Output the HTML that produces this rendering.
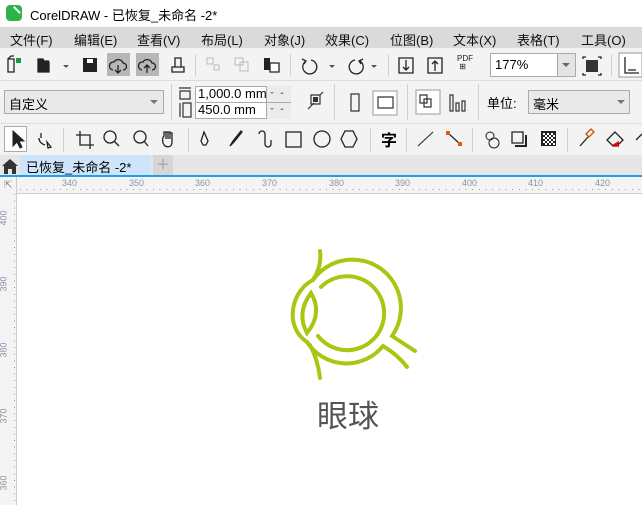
<!DOCTYPE html>
<html><head><meta charset="utf-8"><style>
*{margin:0;padding:0;box-sizing:border-box}
body{width:642px;height:505px;overflow:hidden;background:#fff;font-family:"Liberation Sans","Noto Sans CJK SC",sans-serif;position:relative;color:#000}
.a{position:absolute}
.menu span{position:absolute;top:3px;font-size:13px;color:#111}
.tb{background:#f3f3f3}
.sep{position:absolute;width:1px;background:#d0d0d0}
.rl{position:absolute;font-size:9px;color:#8a93a6}
svg{position:absolute;overflow:visible}
</style></head><body>
<div class="a" style="left:6px;top:5px;width:16px;height:16px;background:#2db34a;border-radius:4px"></div>
<div class="a" style="left:10px;top:8px;width:9px;height:9px;border-top:2px solid #fff;transform:rotate(45deg)"></div>
<div class="a" style="left:30px;top:5px;font-size:13px">CorelDRAW - 已恢复_未命名 -2*</div>
<div class="a menu" style="left:0;top:27px;width:642px;height:21px;background:#dadada">
<span style="left:10px">文件(F)</span><span style="left:74px">编辑(E)</span><span style="left:137px">查看(V)</span><span style="left:201px">布局(L)</span><span style="left:264px">对象(J)</span><span style="left:325px">效果(C)</span><span style="left:390px">位图(B)</span><span style="left:453px">文本(X)</span><span style="left:517px">表格(T)</span><span style="left:581px">工具(O)</span>
</div>
<div class="a tb" style="left:0;top:48px;width:642px;height:32px"></div>
<div class="a" style="left:0;top:80px;width:642px;height:1px;background:#dcdcdc"></div>
<div class="a" style="left:107px;top:53px;width:23px;height:23px;background:#b7b7b7"></div>
<div class="a" style="left:136px;top:53px;width:23px;height:23px;background:#b7b7b7"></div>
<svg width="642" height="32" style="left:0;top:48px" fill="none" stroke="#222" stroke-width="1.3">
<path d="M8 11h6v13H8zM8 11l3-3h3"/><rect x="16" y="10" width="5" height="5" fill="#1a9b3a" stroke="none"/>
<path d="M38 14h11v10H38zM38 14v-3h5l1 2h5" fill="#222"/><path d="M63 17l3 3 3-3z" fill="#555" stroke="none"/>
<rect x="83" y="10" width="14" height="14" fill="#222" stroke="none"/><rect x="87" y="11" width="6" height="4" fill="#fff" stroke="none"/>
<path d="M113 22a4 4 0 0 1 1-8 5 5 0 0 1 9 1 3.5 3.5 0 0 1 0 7M118 17v8M115 22l3 3 3-3"/>
<path d="M142 22a4 4 0 0 1 1-8 5 5 0 0 1 9 1 3.5 3.5 0 0 1 0 7M147 25v-8M144 20l3-3 3 3"/>
<path d="M172 24v-5h12v5zM175 19v-9h6v9"/>
<path d="M207 10h6v6h-6zM214 17h5v5h-5z" stroke="#bbb" stroke-width="1"/>
<path d="M235 10h8v7h-8zM240 14h8v9h-8z" stroke="#bbb" stroke-width="1"/>
<rect x="264" y="10" width="6" height="12" fill="#222" stroke="none"/><path d="M270 15h9v9h-9z" fill="#fff"/>
<path d="M306 13a7 7 0 1 0 5-1M302 11l4 2-2 3"/><path d="M329 17l3 3 3-3z" fill="#555" stroke="none"/>
<path d="M360 13a7 7 0 1 1-5-1M363 11l-4 2 2 3"/><path d="M371 17l3 3 3-3z" fill="#555" stroke="none"/>
<path d="M399 10h14v15h-14zM406 12v10M403 19l3 3 3-3"/>
<path d="M428 10h14v15h-14zM435 23v-10M432 16l3-3 3 3"/>
<path d="M568 17l3 3 3-3z" fill="#555" stroke="none"/>
<rect x="586" y="12" width="12" height="12" fill="#333" stroke="none"/>
<path d="M583 11v-2h3M601 11v-2h-3M583 25v2h3M601 25v2h-3"/>
<rect x="619" y="5" width="23" height="24" fill="#fff" stroke="#999" stroke-width="1"/>
<path d="M625 9v16h14M628 22h8"/>
</svg>
<div class="a" style="left:457px;top:55px;font-size:8px;line-height:8px;color:#222">PDF<br>&nbsp;⊞</div>
<div class="a" style="left:490px;top:53px;width:86px;height:24px;border:1px solid #aaa;background:#fff;font-size:13px;padding:3px 4px">177%</div>
<div class="a" style="left:557px;top:54px;width:18px;height:22px;background:#e4e4e4;border-left:1px solid #aaa"></div>
<div class="a" style="left:562px;top:63px;border:4px solid transparent;border-top:4px solid #666"></div>
<div class="sep" style="left:195px;top:54px;height:22px"></div><div class="sep" style="left:290px;top:54px;height:22px"></div><div class="sep" style="left:388px;top:54px;height:22px"></div><div class="sep" style="left:611px;top:54px;height:22px"></div>
<div class="a tb" style="left:0;top:81px;width:642px;height:42px"></div>
<div class="a" style="left:0;top:123px;width:642px;height:1px;background:#dcdcdc"></div>
<div class="a" style="left:4px;top:90px;width:160px;height:24px;border:1px solid #aaa;background:#e9e9e9;font-size:13px;padding:3px 4px">自定义</div>
<div class="a" style="left:150px;top:100px;border:4px solid transparent;border-top:4px solid #777"></div>
<div class="sep" style="left:171px;top:84px;height:36px"></div>
<div class="a" style="left:195px;top:86px;width:96px;height:33px;border:1px solid #aaa;background:#fff"></div>
<div class="a" style="left:266px;top:86px;width:25px;height:33px;background:#ebebeb;border-left:1px solid #aaa"></div>
<div class="a" style="left:195px;top:102px;width:96px;height:1px;background:#aaa"></div>
<div class="a" style="left:198px;top:86px;font-size:13px">1,000.0 mm</div>
<div class="a" style="left:198px;top:102px;font-size:13px">450.0 mm</div>
<svg width="642" height="42" style="left:0;top:81px" fill="none" stroke="#333" stroke-width="1.2">
<path d="M179 7h12M180 10h10v8h-10zM180 22v14M183 22h8v14h-8z"/>
<path d="M270 11l2 2 2-2zM280 13l2-2 2 2zM270 27l2 2 2-2zM280 29l2-2 2 2z" fill="#888" stroke="none"/>
<path d="M311 14h9v9h-9zM308 28l6-6M320 14l3-3"/><rect x="313" y="16" width="5" height="5" fill="#333" stroke="none"/>
<path d="M351 13h8v17h-8z"/>
<rect x="373" y="10" width="24" height="24" fill="#fff" stroke="#aaa"/><path d="M378 16h15v11h-15z"/>
<rect x="416" y="9" width="24" height="24" fill="#fff" stroke="#aaa"/><path d="M420 14h7v8h-7zM424 18h7v8h-7z"/>
<path d="M450 14h3v16h-3zM456 22h3v8h-3zM462 20h3v10h-3z"/>
</svg>
<div class="sep" style="left:334px;top:84px;height:36px"></div><div class="sep" style="left:407px;top:84px;height:36px"></div><div class="sep" style="left:478px;top:84px;height:36px"></div>
<div class="a" style="left:487px;top:93px;font-size:13px">单位:</div>
<div class="a" style="left:528px;top:90px;width:102px;height:24px;border:1px solid #aaa;background:#e9e9e9;font-size:13px;padding:3px 4px">毫米</div>
<div class="a" style="left:617px;top:100px;border:4px solid transparent;border-top:4px solid #777"></div>
<div class="a tb" style="left:0;top:124px;width:642px;height:31px"></div>
<div class="a" style="left:4px;top:126px;width:23px;height:26px;background:#fff;border:1px solid #aaa"></div>
<svg width="642" height="31" style="left:0;top:124px" fill="none" stroke="#222" stroke-width="1.3">
<path d="M13 7v15l4-4 3 6 2-1-3-6h5z" fill="#222" stroke-width="1"/>
<path d="M41 9v5M39 14c0 4 3 6 6 7M47 18l4 5-3 1z"/>
<path d="M80 7v14h14M76 11h14v14"/>
<circle cx="110" cy="13" r="6"/><path d="M114 17l5 5"/>
<circle cx="140" cy="13" r="6"/><path d="M144 17l4 5"/>
<path d="M165 22c-3-3-3-8-1-10v-4h2v7M166 8h2v7M168 8h2v7M170 9h2v9c0 4-3 6-7 4"/>
<path d="M204 8l4 9-2 4h-3l-2-4z"/>
<path d="M230 22l3-5 8-10 1 1-8 10z" fill="#222"/>
<path d="M259 10a3 3 0 0 1 6 0v10a3 3 0 0 0 6 0v-4"/>
<rect x="286" y="8" width="15" height="15"/>
<circle cx="322" cy="15" r="8"/>
<path d="M345 7h8l4 8-4 8h-8l-4-8z"/>
<path d="M418 22l15-14" stroke-width="1"/>
<path d="M448 9l12 11" stroke-width="1.2"/><rect x="446" y="7" width="4" height="4" fill="#e65a00" stroke="none"/><rect x="458" y="18" width="4" height="4" fill="#e65a00" stroke="none"/>
<circle cx="490" cy="12" r="4" stroke-width="1"/><circle cx="494" cy="19" r="5" stroke-width="1"/>
<path d="M512 8h11v11h-11z"/><path d="M515 22h11v-11" stroke-width="2"/>
<rect x="541" y="7" width="15" height="15" fill="#222" stroke="none"/>
<path d="M543 9h2v2h-2zM547 9h2v2h-2zM551 9h2v2h-2zM545 11h2v2h-2zM549 11h2v2h-2zM553 11h2v2h-2zM543 13h2v2h-2zM547 13h2v2h-2zM551 13h2v2h-2zM545 15h2v2h-2zM549 15h2v2h-2zM553 15h2v2h-2zM543 17h2v2h-2zM547 17h2v2h-2zM551 17h2v2h-2zM545 19h2v2h-2zM549 19h2v2h-2zM553 19h2v2h-2z" fill="#fff" stroke="none"/>
<path d="M586 10l5-5 3 3-5 5z" stroke="#c65000"/><path d="M580 22l8-9" stroke="#222"/>
<path d="M607 16l8-8 8 8-6 6h-4z"/><path d="M612 21l7-4v6z" fill="#e00" stroke="none"/>
<path d="M636 16l6-6"/>
</svg>
<div class="a" style="left:381px;top:127px;font-size:16px;font-weight:bold">字</div>
<div class="sep" style="left:63px;top:128px;height:24px"></div><div class="sep" style="left:188px;top:128px;height:24px"></div><div class="sep" style="left:370px;top:128px;height:24px"></div><div class="sep" style="left:406px;top:128px;height:24px"></div><div class="sep" style="left:472px;top:128px;height:24px"></div><div class="sep" style="left:567px;top:128px;height:24px"></div>
<div class="a" style="left:0;top:155px;width:642px;height:21px;background:#e6e6e6"></div>
<svg width="18" height="18" style="left:1px;top:157px"><path d="M1 9l8-7 8 7h-2v8h-4v-5h-4v5H3V9z" fill="#333"/></svg>
<div class="a" style="left:20px;top:155px;width:131px;height:21px;background:#cde4fb;font-size:13px;padding:2px 6px">已恢复_未命名 -2*</div>
<div class="a" style="left:153px;top:155px;width:20px;height:21px;background:#d6d6d6;color:#aaa;font-size:20px;line-height:20px;text-align:center">+</div>
<div class="a" style="left:0;top:175px;width:642px;height:2px;background:#1ea1e6"></div>
<div class="a" style="left:0;top:177px;width:642px;height:17px;background:#f4f4f4;border-bottom:1px solid #ccc"></div>
<div class="a" style="left:0;top:177px;width:17px;height:328px;background:#f4f4f4;border-right:1px solid #ccc"></div>
<div class="a" style="left:4px;top:180px;font-size:10px;color:#888">⇱</div>
<div class="a" style="left:17px;top:189px;width:625px;height:1px;background-image:repeating-linear-gradient(90deg,#999 0 1px,transparent 1px 6.65px);background-position:3px 0"></div>
<div class="rl" style="left:62px;top:178px">340</div><div class="rl" style="left:129px;top:178px">350</div><div class="rl" style="left:195px;top:178px">360</div><div class="rl" style="left:262px;top:178px">370</div><div class="rl" style="left:329px;top:178px">380</div><div class="rl" style="left:395px;top:178px">390</div><div class="rl" style="left:462px;top:178px">400</div><div class="rl" style="left:528px;top:178px">410</div><div class="rl" style="left:595px;top:178px">420</div>
<div class="a" style="left:14px;top:194px;width:1px;height:311px;background-image:repeating-linear-gradient(180deg,#999 0 1px,transparent 1px 6.65px)"></div>
<div class="rl" style="left:-4px;top:213px;transform:rotate(-90deg)">400</div>
<div class="rl" style="left:-4px;top:279px;transform:rotate(-90deg)">390</div>
<div class="rl" style="left:-4px;top:345px;transform:rotate(-90deg)">380</div>
<div class="rl" style="left:-4px;top:411px;transform:rotate(-90deg)">370</div>
<div class="rl" style="left:-4px;top:478px;transform:rotate(-90deg)">360</div>
<svg width="642" height="505" style="left:0;top:0" fill="none" stroke="#a9c613" stroke-width="4" stroke-linecap="round">
<path d="M320 251Q322 266 313 280"/>
<path d="M313 280A48 48 0 0 1 392 336L415 351"/>
<path d="M313 280C292 290 283 326 307 342"/>
<path d="M307 342A47 47 0 0 0 383 346Q398 355 407 367"/>
<path d="M310 345Q318 360 320 378"/>
<path d="M321 287A37 37 0 1 1 318 336"/>
<path d="M311 293Q296 313 307 333Q323 313 311 293Z"/>
</svg>
<div class="a" style="left:317px;top:396px;font-size:31px;color:#555;font-family:'Noto Sans CJK SC',sans-serif;line-height:36px">眼球</div>
</body></html>
